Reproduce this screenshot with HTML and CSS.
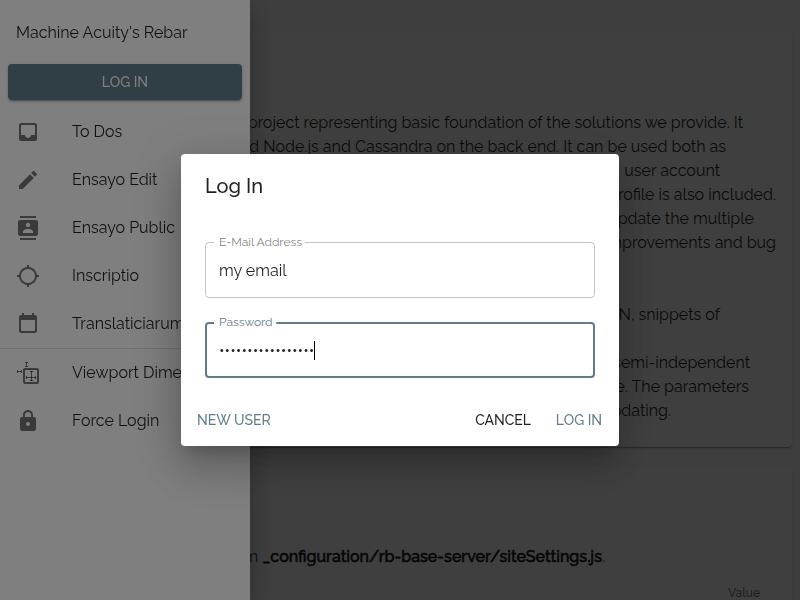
FILE: index.html
```html
<!DOCTYPE html>
<html lang="en">
<head>
<meta charset="utf-8">
<title>Machine Acuity's Rebar</title>
<link rel="stylesheet" href="styles.css">
</head>
<body>
<main class="page">
  <article class="card card-intro">
    <div class="para">
      <p class="end-743">project representing basic foundation of the solutions we provide. It</p>
      <p class="end-726">d Node.js and Cassandra on the back end. It can be used both as</p>
      <p class="end-719">user account</p>
      <p class="end-775">profile is also included.</p>
      <p class="end-754">update the multiple</p>
      <p class="end-775">improvements and bug</p>
    </div>
    <div class="para"><p class="end-719">JSON, snippets of</p></div>
    <div class="para">
      <p class="end-750">semi-independent</p>
      <p class="end-749">e. The parameters</p>
      <p class="end-670">updating.</p>
    </div>
  </article>
  <article class="card card-config">
    <p class="end-605">m <strong>_configuration/rb-base-server/siteSettings.js</strong>.</p>
    <div class="table-head">Value</div>
  </article>
</main>
<div class="scrim"></div>
<nav class="drawer">
  <h1 class="brand">Machine Acuity's Rebar</h1>
  <button class="btn-contained">Log In</button>
  <ul class="menu">
    <li><svg viewBox="0 0 24 24"><path d="M19 3H4.99c-1.11 0-1.98.89-1.98 2L3 19c0 1.1.88 2 1.99 2H19c1.1 0 2-.9 2-2V5c0-1.11-.9-2-2-2zm0 12h-4c0 1.66-1.35 3-3 3s-3-1.34-3-3H4.99V5H19v10z"/></svg><span>To Dos</span></li>
    <li><svg viewBox="0 0 24 24"><path d="M3 17.25V21h3.75L17.81 9.94l-3.75-3.75L3 17.25zM20.71 7.04c.39-.39.39-1.02 0-1.41l-2.34-2.34c-.39-.39-1.02-.39-1.41 0l-1.83 1.83 3.75 3.75 1.83-1.83z"/></svg><span>Ensayo Edit</span></li>
    <li><svg viewBox="0 0 24 24"><path d="M20 0H4v2h16V0zM4 24h16v-2H4v2zM20 4H4c-1.1 0-2 .9-2 2v12c0 1.1.9 2 2 2h16c1.1 0 2-.9 2-2V6c0-1.1-.9-2-2-2zm-8 2.75c1.24 0 2.25 1.01 2.25 2.25s-1.01 2.25-2.25 2.25S9.75 10.24 9.75 9 10.76 6.75 12 6.75zM17 17H7v-1.5c0-1.67 3.33-2.5 5-2.5s5 .83 5 2.5V17z"/></svg><span>Ensayo Public</span></li>
    <li><svg viewBox="0 0 24 24"><path d="M20.94 11c-.46-4.17-3.77-7.48-7.94-7.94V1h-2v2.06C6.83 3.52 3.52 6.83 3.06 11H1v2h2.06c.46 4.17 3.77 7.48 7.94 7.94V23h2v-2.06c4.17-.46 7.48-3.77 7.94-7.94H23v-2h-2.06zM12 19c-3.87 0-7-3.13-7-7s3.13-7 7-7 7 3.13 7 7-3.13 7-7 7z"/></svg><span>Inscriptio</span></li>
    <li><svg viewBox="0 0 24 24"><path d="M19 3h-1V1h-2v2H8V1H6v2H5c-1.11 0-1.99.9-1.99 2L3 19c0 1.1.89 2 2 2h14c1.1 0 2-.9 2-2V5c0-1.1-.9-2-2-2zm0 16H5V8h14v11z"/></svg><span>Translaticiarum</span></li>
  </ul>
  <ul class="menu menu-tools">
    <li><svg viewBox="0 0 24 24"><g fill="none" stroke="currentColor"><rect x="8" y="8" width="14" height="14" rx="1" stroke-width="2"/><path d="M15.5 10v10M14 10.5h3M14 19.5h3M10 16.5h10M10.5 15v3M19.5 15v3M10.5 1.5v4M9 1.5h3M9 5.5h3M1.5 10.5h4M1.5 9v3M5.5 9v3"/></g></svg><span>Viewport Dimensions</span></li>
    <li><svg viewBox="0 0 24 24"><path d="M18 8h-1V6c0-2.76-2.24-5-5-5S7 3.24 7 6v2H6c-1.1 0-2 .9-2 2v10c0 1.1.9 2 2 2h12c1.1 0 2-.9 2-2V10c0-1.1-.9-2-2-2zm-6 9c-1.1 0-2-.9-2-2s.9-2 2-2 2 .9 2 2-.9 2-2 2zm3.1-9H8.9V6c0-1.71 1.39-3.1 3.1-3.1 1.71 0 3.1 1.39 3.1 3.1v2z"/></svg><span>Force Login</span></li>
  </ul>
</nav>
<div class="overlay">
  <section class="dialog" role="dialog">
    <h2 class="dialog-title">Log In</h2>
    <div class="dialog-content">
      <fieldset class="field"><legend>E-Mail Address</legend><div class="value">my email</div></fieldset>
      <fieldset class="field focused"><legend>Password</legend><div class="value"><span class="dots">•••••••••••••••••</span><i class="caret"></i></div></fieldset>
    </div>
    <div class="dialog-actions">
      <button class="btn primary">New User</button>
      <span class="spacer"></span>
      <button class="btn">Cancel</button>
      <button class="btn primary">Log In</button>
    </div>
  </section>
</div>
</body>
</html>
```
FILE: styles.css
```css
* { box-sizing: border-box; }
html, body { height: 100%; overflow: hidden; }
body {
  margin: 0;
  background: #fafafa;
  color: rgba(0, 0, 0, .87);
  font: 400 16px/24px Raleway, Lato, sans-serif;
}
h1, h2, p, ul { margin: 0; padding: 0; font-weight: 400; }
button { border: 0; background: none; font: inherit; }

.page { display: flex; flex-direction: column; height: 100%; padding: 31px 8px 0; }
.card {
  background: #fff;
  border-radius: 4px;
  box-shadow: 0 2px 1px -1px rgba(0,0,0,.2), 0 1px 1px rgba(0,0,0,.14), 0 1px 3px rgba(0,0,0,.12);
}
.card p { white-space: nowrap; text-align: right; }
.card-intro { padding: 80px 0 24px; }
.para + .para { margin-top: 48px; }
.para:last-child { margin-top: 24px; }
.card-config { flex: 1; margin-top: 19px; padding-top: 79px; border-radius: 4px 4px 0 0; }
.card .end-743 { padding-right: 49px; }
.card .end-726 { padding-right: 66px; }
.card .end-719 { padding-right: 72px; }
.card .end-775 { padding-right: 16px; }
.card .end-754 { padding-right: 38px; }
.card .end-750 { padding-right: 42px; }
.card .end-749 { padding-right: 43px; }
.card .end-670 { padding-right: 121px; }
.card .end-605 { padding-right: 187px; }
.card strong { font-weight: 500; -webkit-text-stroke: .6px currentColor; }
.table-head {
  margin-top: 17px;
  padding-right: 32px;
  text-align: right;
  font-size: 12px;
  line-height: 14px;
  font-weight: 500;
  color: rgba(0, 0, 0, .54);
}

.scrim { position: fixed; inset: 0; background: rgba(0, 0, 0, .5); }

.drawer {
  position: fixed;
  inset: 0 auto 0 0;
  width: 250px;
  background: #fff;
  box-shadow: 0 8px 10px -5px rgba(0,0,0,.2), 0 16px 24px 2px rgba(0,0,0,.14), 0 6px 30px 5px rgba(0,0,0,.12);
}
.brand { padding: 21px 16px 19px; font-size: 16px; line-height: 24px; }
.btn-contained {
  display: block;
  width: 234px;
  height: 36px;
  margin: 0 8px 8px;
  border-radius: 4px;
  background: #607d8b;
  color: #fff;
  font-size: 14px;
  font-weight: 500;
  text-transform: uppercase;
  box-shadow: 0 3px 1px -2px rgba(0,0,0,.2), 0 2px 2px rgba(0,0,0,.14), 0 1px 5px rgba(0,0,0,.12);
}
.menu { list-style: none; }
.menu li { display: flex; align-items: center; height: 48px; padding-left: 16px; white-space: nowrap; }
.menu svg { width: 24px; height: 24px; margin-right: 32px; fill: currentColor; color: rgba(0, 0, 0, .54); }
.menu-tools { border-top: 1px solid rgba(0, 0, 0, .12); }

.overlay {
  position: fixed;
  inset: 0;
  display: flex;
  align-items: center;
  justify-content: center;
  background: rgba(0, 0, 0, .5);
}
.dialog {
  width: 438px;
  border-radius: 4px;
  background: #fff;
  box-shadow: 0 11px 15px -7px rgba(0,0,0,.2), 0 24px 38px 3px rgba(0,0,0,.14), 0 9px 46px 8px rgba(0,0,0,.12);
}
.dialog-title { padding: 16px 24px; font-size: 20px; line-height: 32px; font-weight: 500; }
.dialog-content { display: grid; gap: 24px; padding: 24px 24px 16px; }
.field {
  position: relative;
  min-width: 0;
  height: 56px;
  margin: 0;
  padding: 0 13px;
  border: 1px solid rgba(0, 0, 0, .23);
  border-radius: 4px;
}
.field legend {
  position: absolute;
  top: -9px;
  left: 8px;
  padding: 0 4px 0 6.667px;
  background: #fff;
  font-size: 16px;
  line-height: 21px;
  white-space: nowrap;
  transform: scale(.75);
  transform-origin: 0 0;
  color: rgba(0, 0, 0, .54);
}
.value { display: flex; align-items: center; height: 54px; padding-top: 2px; }
.focused { padding: 0 12px; border: 2px solid #607d8b; }
.focused legend { top: -10px; left: 7px; padding-right: 5px; color: #607d8b; }
.focused .value { height: 52px; padding-top: 1px; }
.caret { width: 1px; height: 19px; background: #000; }
.dialog-actions { display: flex; gap: 8px; padding: 8px; }
.spacer { flex: 1; }
.btn {
  min-width: 64px;
  height: 36px;
  padding: 0 8px;
  color: rgba(0, 0, 0, .87);
  font-size: 14px;
  font-weight: 500;
  text-transform: uppercase;
}
.primary { color: #607d8b; }
```
